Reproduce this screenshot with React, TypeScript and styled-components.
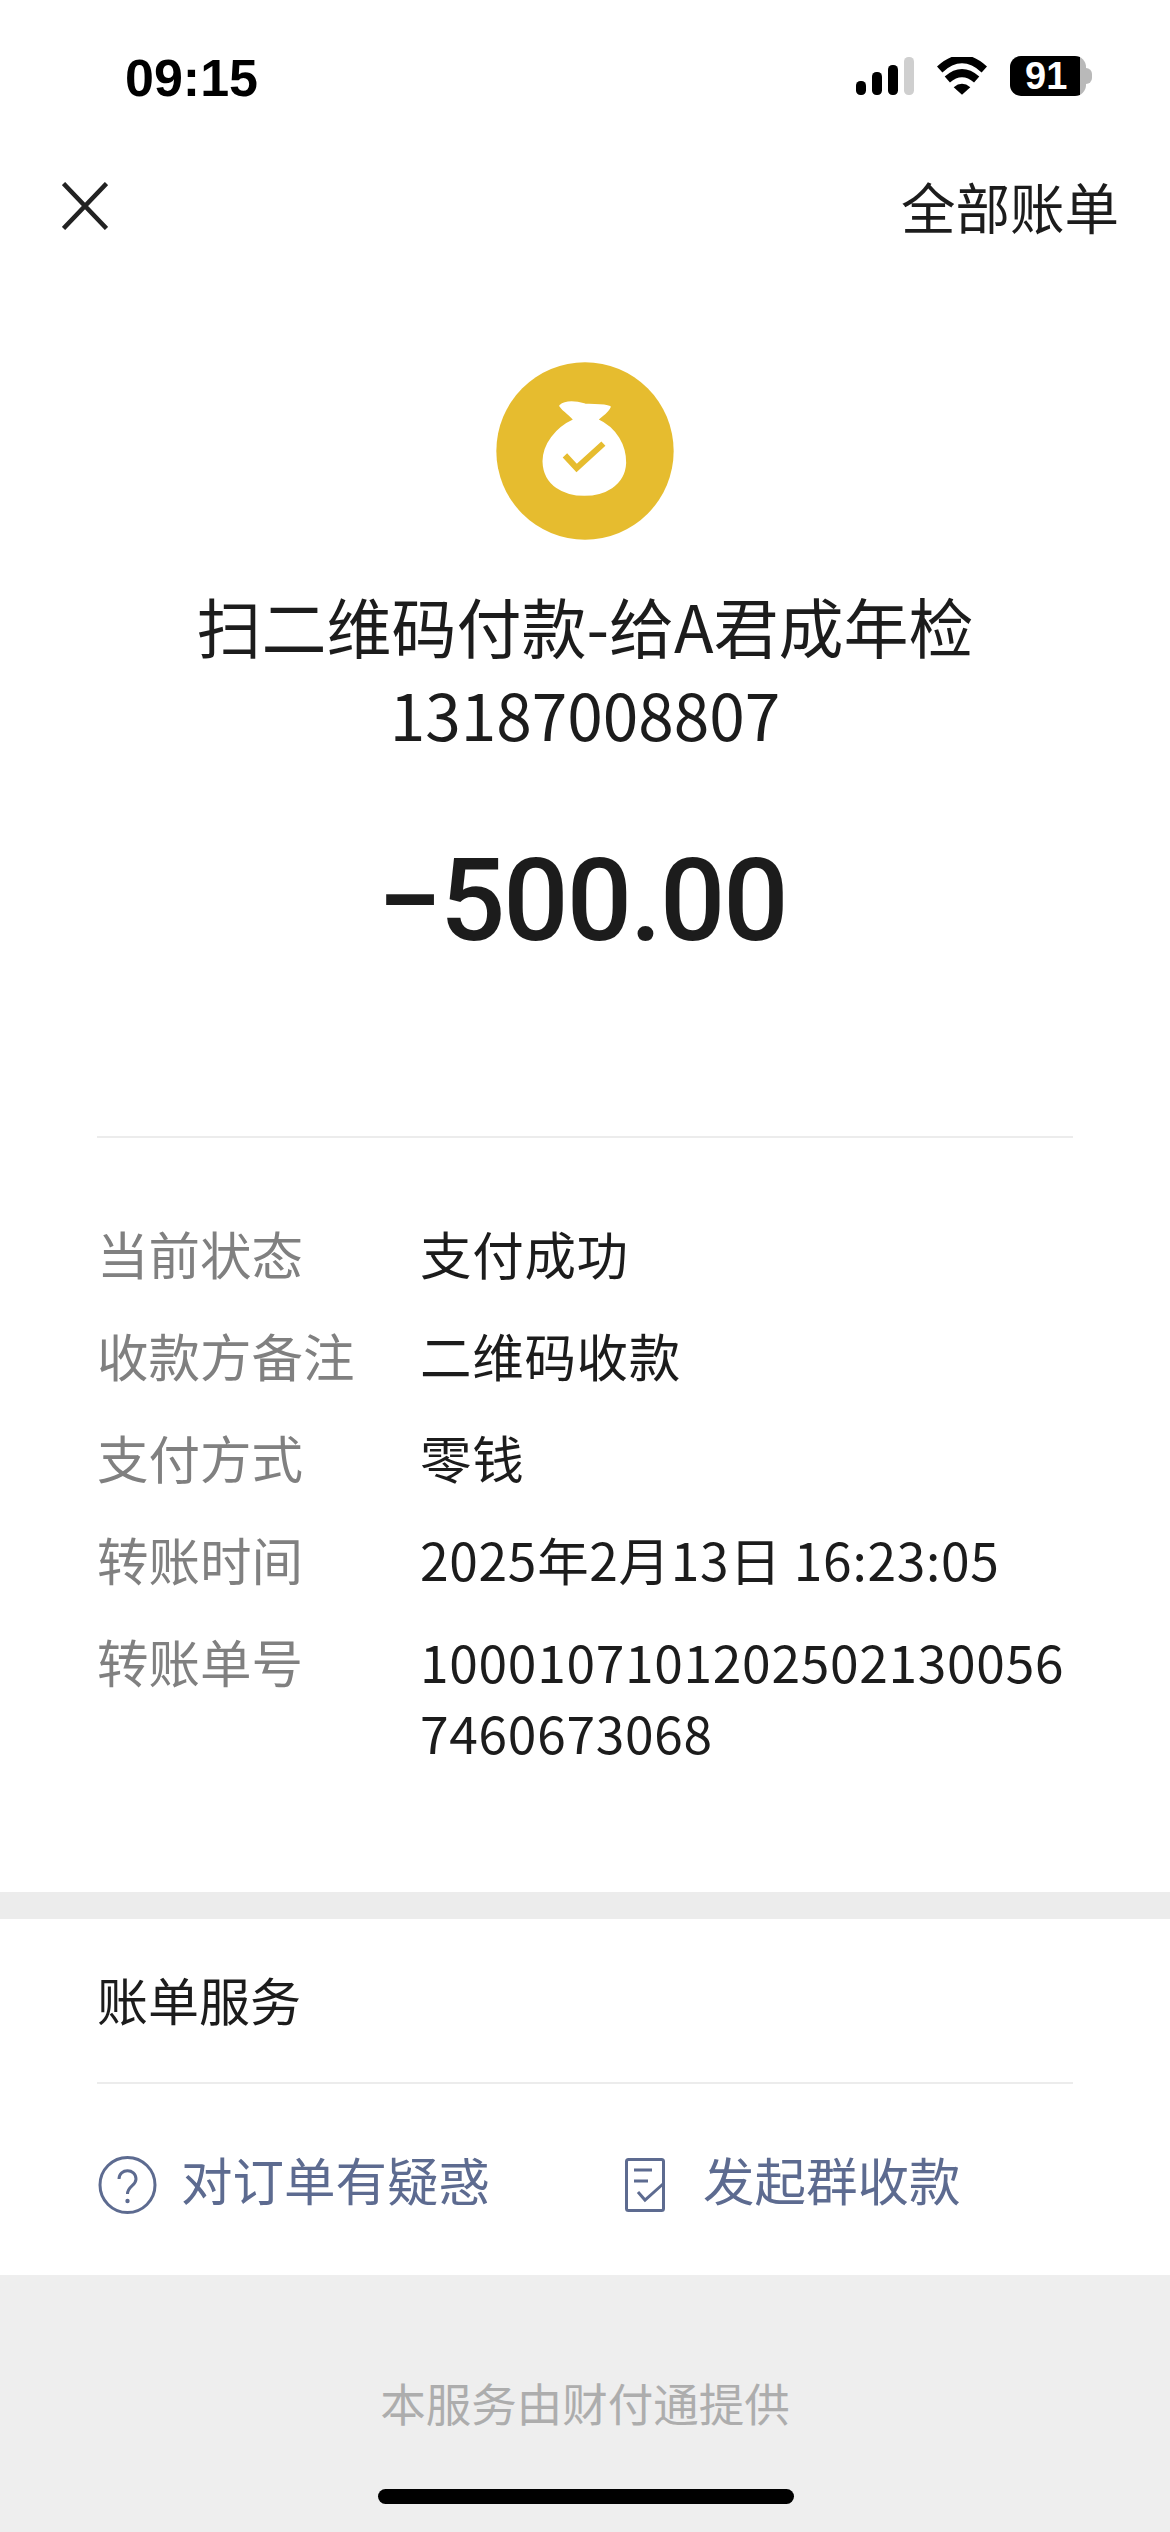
import React from 'react';
import styled, { createGlobalStyle } from 'styled-components';

const GlobalStyle = createGlobalStyle`
  html, body {
    margin: 0;
    padding: 0;
    background: #ffffff;
  }
  * {
    box-sizing: border-box;
  }
`;

const Page = styled.div`
  width: 1170px;
  height: 2532px;
  display: flex;
  flex-direction: column;
  overflow: hidden;
  background: #ffffff;
  color: #1c1c1c;
  font-family: 'Noto Sans CJK SC', 'Noto Sans', sans-serif;
`;

const StatusBar = styled.div`
  height: 166px;
  padding: 56px 84px 0 125px;
  display: flex;
  justify-content: space-between;
  align-items: flex-start;
`;

const Clock = styled.div`
  font-family: 'Liberation Sans', sans-serif;
  font-size: 52px;
  font-weight: 700;
  line-height: 44px;
  color: #000000;
`;

const StatusIcons = styled.div`
  display: flex;
  align-items: center;
  gap: 23px;
  height: 40px;
`;

const Battery = styled.div`
  position: relative;
  width: 76px;
  height: 40px;
  border-radius: 11px;
  background: linear-gradient(90deg, #000000 92%, #b9b9b9 92%);
  color: #ffffff;
  font-family: 'Liberation Sans', sans-serif;
  font-size: 38px;
  font-weight: 700;
  line-height: 40px;
  padding-left: 15px;

  &::after {
    content: '';
    position: absolute;
    right: -6px;
    top: 12px;
    width: 6px;
    height: 16px;
    border-radius: 0 6px 6px 0;
    background: #b9b9b9;
  }
`;

const NavBar = styled.div`
  height: 80px;
  padding: 0 51px 0 62px;
  display: flex;
  justify-content: space-between;
  align-items: center;
`;

const NavLink = styled.div`
  font-size: 54.5px;
  line-height: 80px;
  color: #1c1c1c;
`;

const Summary = styled.div`
  display: flex;
  flex-direction: column;
  align-items: center;
  padding: 116px 0 165px;
`;

const Title = styled.div`
  margin-top: 41px;
  font-size: 65px;
  line-height: 88px;
  text-align: center;
  color: #1c1c1c;
`;

const TitleNumber = styled.span`
  font-size: 64px;
`;

const Amount = styled.div`
  margin-top: 74px;
  padding-right: 6px;
  font-family: 'Roboto', sans-serif;
  font-size: 115px;
  font-weight: 500;
  letter-spacing: -2px;
  line-height: 140px;
  color: #1c1c1c;
`;

const Divider = styled.div`
  height: 2px;
  margin: 0 97px;
  background: #ececec;
`;

const Details = styled.div`
  padding: 79px 97px 0;
  height: 754px;
  display: flex;
  flex-direction: column;
  gap: 31px;
`;

const DetailRow = styled.div`
  display: grid;
  grid-template-columns: 323px 1fr;
  font-size: 51.5px;
  line-height: 71px;
`;

const DetailLabel = styled.div`
  color: #808080;
`;

const DetailValue = styled.div`
  color: #1c1c1c;
  letter-spacing: 0.7px;
  word-break: break-all;
`;

const Band = styled.div`
  height: 27px;
  background: #ececec;
`;

const SectionTitle = styled.div`
  height: 165px;
  margin: 0 97px;
  font-size: 51px;
  line-height: 160px;
  border-bottom: 2px solid #ececec;
`;

const Actions = styled.div`
  height: 191px;
  padding: 0 0 2px 98px;
  display: flex;
  align-items: center;
`;

const Action = styled.div<{ $width: number; $gap: number }>`
  width: ${p => p.$width}px;
  display: flex;
  align-items: center;
  gap: ${p => p.$gap}px;
  font-size: 51.5px;
  line-height: 71px;
  color: #5d6b90;

  svg {
    margin-top: 12px;
  }
`;

const Footer = styled.div`
  position: relative;
  flex: 1;
  padding-top: 92px;
  background: #eeeeee;
  font-size: 45.5px;
  line-height: 71px;
  text-align: center;
  color: #adadad;
`;

const HomeBar = styled.div`
  position: absolute;
  left: 378px;
  bottom: 28px;
  width: 416px;
  height: 15px;
  border-radius: 8px;
  background: #000000;
`;

const SignalIcon = () => (
  <svg width="58" height="38" viewBox="0 0 58 38">
    <rect x="0" y="24" width="10" height="14" rx="4.5" fill="#000" />
    <rect x="16" y="15" width="10" height="23" rx="4.5" fill="#000" />
    <rect x="32" y="8" width="10" height="30" rx="4.5" fill="#000" />
    <rect x="48" y="0" width="10" height="38" rx="4.5" fill="#cfcfcf" />
  </svg>
);

const WifiIcon = () => (
  <svg width="50" height="38" viewBox="350 55 150 113">
    <path d="M358 92 Q425 30 492 92" fill="none" stroke="#000" strokeWidth="24" />
    <path d="M381 122 Q425 84 469 122" fill="none" stroke="#000" strokeWidth="24" />
    <path d="M400 145 Q425 125 450 145 L425 168 Z" fill="#000" />
  </svg>
);

const CloseIcon = () => (
  <svg width="46" height="48" viewBox="0 0 46 48">
    <path d="M1.5 1.5 L44.5 46.5 M44.5 1.5 L1.5 46.5" fill="none" stroke="#222" strokeWidth="4.5" />
  </svg>
);

const BagIcon = () => (
  <svg width="178" height="178" viewBox="80 68 530 532">
    <circle cx="345" cy="334" r="265" fill="#e6bc2f" />
    <path
      d="M271 199 C288 184 320 188 345 195 C370 198 400 193 419 202 C412 220 392 228 382 241 C438 266 466 320 465 370 C462 437 400 465 343 465 C285 465 223 437 221 365 C221 315 258 266 313 241 C303 226 283 216 271 199 Z"
      fill="#ffffff"
      stroke="#ffffff"
      strokeWidth="6"
      strokeLinejoin="round"
    />
    <path d="M285 347 L320 385 L400 312" fill="none" stroke="#e6bc2f" strokeWidth="18" />
  </svg>
);

const HelpIcon = () => (
  <svg width="59" height="58" viewBox="0 0 59 58">
    <circle cx="29.5" cy="29" r="27.5" fill="none" stroke="#5d6b90" strokeWidth="3" />
    <path
      d="M21 23 C21 12 38 12 38 23 C38 30 29.5 30 29.5 38"
      fill="none"
      stroke="#5d6b90"
      strokeWidth="3"
    />
    <circle cx="29.5" cy="45" r="2.2" fill="#5d6b90" />
  </svg>
);

const BillIcon = () => (
  <svg width="40" height="54" viewBox="0 0 40 54">
    <rect x="1.5" y="1.5" width="37" height="51" rx="2" fill="none" stroke="#5d6b90" strokeWidth="3" />
    <path d="M9 12 H27 M9 23 H23 M13 34 L20 42 L38 26" fill="none" stroke="#5d6b90" strokeWidth="3" />
  </svg>
);

const details = [
  { label: '当前状态', value: '支付成功' },
  { label: '收款方备注', value: '二维码收款' },
  { label: '支付方式', value: '零钱' },
  { label: '转账时间', value: '2025年2月13日 16:23:05' },
  { label: '转账单号', value: '10001071012025021300567460673068' },
];

export default function App() {
  return (
    <>
      <GlobalStyle />
      <Page>
        <StatusBar>
          <Clock>09:15</Clock>
          <StatusIcons>
            <SignalIcon />
            <WifiIcon />
            <Battery>91</Battery>
          </StatusIcons>
        </StatusBar>
        <NavBar>
          <CloseIcon />
          <NavLink>全部账单</NavLink>
        </NavBar>
        <Summary>
          <BagIcon />
          <Title>
            扫二维码付款-给A君成年检
            <br />
            <TitleNumber>13187008807</TitleNumber>
          </Title>
          <Amount>−500.00</Amount>
        </Summary>
        <Divider />
        <Details>
          {details.map(row => (
            <DetailRow key={row.label}>
              <DetailLabel>{row.label}</DetailLabel>
              <DetailValue>{row.value}</DetailValue>
            </DetailRow>
          ))}
        </Details>
        <Band />
        <SectionTitle>账单服务</SectionTitle>
        <Actions>
          <Action $width={527} $gap={24}>
            <HelpIcon />
            对订单有疑惑
          </Action>
          <Action $width={400} $gap={38}>
            <BillIcon />
            发起群收款
          </Action>
        </Actions>
        <Footer>
          本服务由财付通提供
          <HomeBar />
        </Footer>
      </Page>
    </>
  );
}
